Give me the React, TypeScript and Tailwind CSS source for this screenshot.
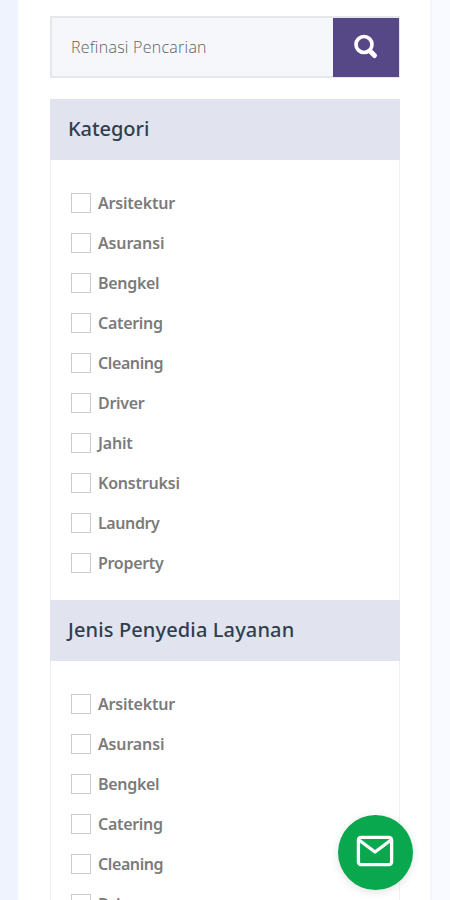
import clsx from "clsx";

const categories = [
  { name: "Arsitektur", spacing: "tracking-[-0.2px]" },
  { name: "Asuransi", spacing: "tracking-[-0.15px]" },
  { name: "Bengkel", spacing: "tracking-[-0.3px]" },
  { name: "Catering", spacing: "tracking-[-0.3px]" },
  { name: "Cleaning", spacing: "tracking-[-0.4px]" },
  { name: "Driver", spacing: "tracking-[-0.3px]" },
  { name: "Jahit", spacing: "tracking-[-0.2px]" },
  { name: "Konstruksi", spacing: "tracking-[-0.2px]" },
  { name: "Laundry", spacing: "tracking-[-0.4px]" },
  { name: "Property", spacing: "tracking-[-0.3px]" },
];

const SearchBox = () => {
  return (
    <div className="flex h-[62px] border-2 border-[#e6e7ed] bg-[#f6f7fb]">
      <input
        type="text"
        placeholder="Refinasi Pencarian"
        className="min-w-0 flex-1 bg-transparent pl-[19px] font-['Open_Sans',sans-serif] text-[16px] font-light tracking-[0.25px] outline-none placeholder:text-[#606060]"
      />
      <button type="button" aria-label="Cari" className="-mr-px -mb-px flex w-[66px] items-center justify-center bg-[#564787]">
        <svg width="26" height="26" viewBox="0 0 26 26" fill="none" stroke="white" className="mb-[2px]">
          <circle cx="11" cy="10.5" r="8" strokeWidth="3.7" />
          <path d="M17.5 17.5L21.5 21.5" strokeWidth="5" strokeLinecap="round" />
        </svg>
      </button>
    </div>
  );
};

const FilterSection = ({ title, wide }: { title: string; wide?: boolean }) => {
  return (
    <section>
      <h2
        className={clsx(
          "-mx-px flex h-[61px] items-center bg-[#e1e4ef] pb-[2px] pl-[18px] font-['Noto_Sans',sans-serif] text-[20px] font-medium text-[#2f3e4d]",
          wide ? "tracking-[0.13px]" : "tracking-[-0.05px]"
        )}
      >
        {title}
      </h2>
      <div className="pt-[23px] pb-[17px]">
        {categories.map((category) => (
          <label key={category.name} className="flex h-10 items-center pl-5">
            <input type="checkbox" className="size-5 shrink-0 appearance-none border border-[#cbcbcb] bg-white" />
            <span
              className={clsx(
                "ml-[7px] font-['Noto_Sans',sans-serif] text-[16px] leading-5 font-semibold text-[#7b7b7b]",
                category.spacing
              )}
            >
              {category.name}
            </span>
          </label>
        ))}
      </div>
    </section>
  );
};

const App = () => {
  return (
    <div className="flex h-screen overflow-hidden bg-white">
      <div className="w-[18px] shrink-0 bg-[#eff3fe]" />
      <main className="min-w-0 flex-1 pt-4 pr-[30px] pl-8">
        <SearchBox />
        <div className="mt-[21px] border-x border-[#efeff3]">
          <FilterSection title="Kategori" />
          <FilterSection title="Jenis Penyedia Layanan" wide />
        </div>
      </main>
      <div className="w-5 shrink-0 border-l-2 border-[#f4f5fa] bg-[#f8faff]" />
      <button
        type="button"
        aria-label="Email"
        className="fixed right-[37px] bottom-[10px] flex size-[75px] items-center justify-center rounded-full bg-[#09a84e] pr-px pb-[3px] shadow-[0_2px_8px_rgba(0,0,0,0.12)]"
      >
        <svg width="38" height="32" viewBox="0 0 38 32" fill="none" stroke="white" strokeWidth="3.3" strokeLinejoin="round">
          <rect x="2.4" y="2.4" width="33.2" height="27.2" rx="2.5" />
          <path d="M3 5L19 17L35 5" />
        </svg>
      </button>
    </div>
  );
};

export default App;
